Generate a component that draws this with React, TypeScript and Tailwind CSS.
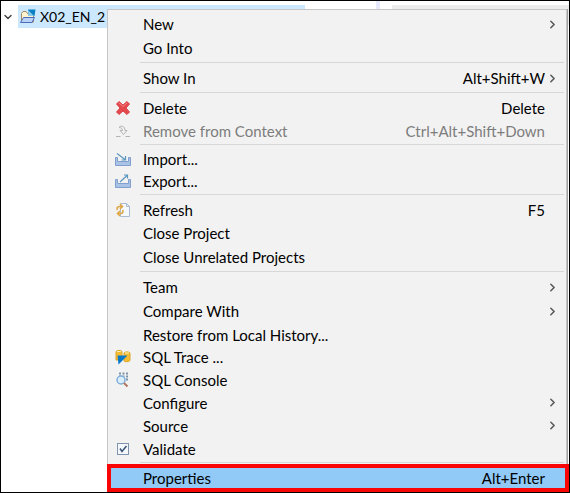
import type { ReactNode } from "react";
import { ChevronDown, ChevronRight } from "lucide-react";

function DeleteIcon() {
  return (
    <svg width="16" height="16" viewBox="0 0 16 16">
      <path d="M4 1.500 L8 5 L12 1.500 L14.500 4 L11 8 L14.500 12 L12 14.500 L8 11 L4 14.500 L1.500 12 L5 8 L1.500 4Z" fill="#e5484d" stroke="#d9474c" strokeLinejoin="round" />
      <path d="M4 3 L8 6.500 L12 3" fill="none" stroke="#f28a8a" />
    </svg>
  );
}

function RemoveIcon() {
  return (
    <svg width="16" height="16" viewBox="0 0 16 16" fill="none" stroke="#b4b4b4">
      <path d="M1 13.500 H5.500 M10.500 13.500 H15 M4 4.500 C6 2 10 3 10 7.500 H12 L8.500 11.500 L5 7.500 H7.500 C7.500 5.500 6 4.500 4 4.500Z" />
    </svg>
  );
}

function TrayIcon({ out = false }: { out?: boolean }) {
  return (
    <svg width="16" height="16" viewBox="0 0 16 16" fill="none">
      <path d="M0.500 6.500 H2.500 V10.500 H13.500 V6.500 H15.500 V14.500 H0.500Z" fill="#a9c3e6" stroke="#809fce" />
      {out ? (
        <path d="M5 9 L12 2.500 M9 2 H12.500 V5.500" stroke="#5b98bd" strokeWidth="1.200" />
      ) : (
        <path d="M2 2.500 L10 8.500 M10.500 5 V9 H6.500" stroke="#5b98bd" strokeWidth="1.200" />
      )}
    </svg>
  );
}

function RefreshIcon() {
  return (
    <svg width="16" height="16" viewBox="0 0 16 16" fill="none">
      <path d="M5.500 1.500 H11.500 L14.500 4.500 V14.500 H5.500Z" fill="#f5f8fc" stroke="#a9bbd0" />
      <path d="M11.500 1.500 V4.500 H14.500" stroke="#a9bbd0" />
      <path d="M7.500 4.500 H4.500 C2 4.500 1.500 6.500 2.500 8 M5 2 L7.500 4.500 L5 7 M2.500 11.500 H5.500 C8 11.500 8.500 9.500 7.500 8 M5 9 L2.500 11.500 L5 14" stroke="#dfa845" strokeWidth="1.600" />
    </svg>
  );
}

function TraceIcon() {
  return (
    <svg width="16" height="16" viewBox="0 0 16 16">
      <path d="M1 2.500 C2 1 6 1 7 2.500 V11 H1Z M9 4 C10 2.500 14 2.500 15 4 V11.500 C14 13 10 13 9 12Z" fill="#f7bd32" stroke="#dda526" />
      <path d="M2 2.500 H6 M10 4 H14" stroke="#fff0b5" />
      <path d="M2.500 6.500 H12.500 L3.500 15.500Z" fill="#0878c9" />
    </svg>
  );
}

function ConsoleIcon() {
  return (
    <svg width="16" height="16" viewBox="0 0 16 16" fill="none">
      <path d="M4 1.500 H14 M4 4.500 H14 M11 7.500 H14" stroke="#7f93ad" strokeWidth="2" strokeDasharray="2 1.500" />
      <circle cx="6" cy="8" r="4" fill="#dceefa" stroke="#7faedb" strokeWidth="1.500" />
      <path d="M9 11 L12.500 14.500" stroke="#b0765c" strokeWidth="2" />
    </svg>
  );
}

function ProjectIcon() {
  return (
    <svg width="16" height="16" viewBox="0 0 16 16">
      <path d="M1.500 13 V4.500 L3 2.500 H6 L7.500 4.500 H13.500 V13Z" fill="#fff2cf" stroke="#a58a64" />
      <path d="M0.500 13.500 L3.500 8.500 H14.500 L12 13.500Z" fill="#b9d2f5" stroke="#4a6cb8" />
      <path d="M8 0.500 H15.500 L14.500 7 H8.500Z" fill="#0a80c4" />
      <path d="M8 1 L14 7 H8.500Z" fill="#8ecbe8" />
    </svg>
  );
}

const heights = {
  compact: "h-[22px]",
  regular: "h-[23px]",
  tall: "h-6",
};

type ItemProps = {
  label: string;
  icon?: ReactNode;
  shortcut?: string;
  submenu?: boolean;
  size?: keyof typeof heights;
  disabled?: boolean;
};

function Item({ label, icon, shortcut, submenu, size = "regular", disabled }: ItemProps) {
  return (
    <button
      type="button"
      role="menuitem"
      disabled={disabled}
      className={`flex w-full items-center px-[7px] text-left disabled:text-[#7d7d7d] ${heights[size]}`}
    >
      <span className="flex w-7 shrink-0">{icon}</span>
      <span className="flex-1">{label}</span>
      <span>{shortcut}</span>
      <span className="flex w-[14px] shrink-0 justify-end">
        {submenu && <ChevronRight size={13} strokeWidth={3} color="#5c5c5c" />}
      </span>
    </button>
  );
}

function CheckItem({ label }: { label: string }) {
  return (
    <label className="flex h-[23px] items-center px-[7px]">
      <span className="grid w-7 shrink-0 pl-0.5">
        <input
          type="checkbox"
          defaultChecked
          className="peer col-start-1 row-start-1 size-3 appearance-none border border-[#7f93ad] bg-[#f4f8fc]"
        />
        <svg viewBox="0 0 12 12" fill="none" className="pointer-events-none invisible col-start-1 row-start-1 size-3 peer-checked:visible">
          <path d="M3 5.500 L5 8.500 L9.500 3" stroke="#3f5878" strokeWidth="1.600" />
        </svg>
      </span>
      <span>{label}</span>
    </label>
  );
}

function Separator() {
  return (
    <div role="separator" className="mr-0.5 ml-8 h-1.5 pt-0.5">
      <div className="h-px bg-[#d7d7d7]" />
    </div>
  );
}

export default function App() {
  return (
    <main className="relative min-h-screen border border-black bg-white font-['Lato',sans-serif] text-[15px] leading-5 text-black">
      <div className="flex items-start pt-1">
        <button type="button" aria-label="Collapse project" className="flex h-6 w-[17px] shrink-0 items-center pl-px">
          <ChevronDown size={12} strokeWidth={3} color="#444" />
        </button>
        <div className="flex h-[23px] w-[287px] shrink-0 items-center gap-1 bg-[#cce8ff] pl-0.5">
          <ProjectIcon />
          <span className="text-sm">X02_EN_2</span>
        </div>
        <div className="-mt-1 ml-[71px] h-6 w-1 shrink-0 bg-[#e6e9fb]" />
        <div className="ml-3 h-5 flex-1 bg-[#ececec]" />
      </div>
      <div
        role="menu"
        className="absolute top-2 right-0.5 left-[106px] border border-b-0 border-[#c6c6c6] bg-[#f2f2f2] pt-0.5 shadow-[1px_0_0_#a0a0a0]"
      >
        <Item label="New" submenu size="tall" />
        <Item label="Go Into" size="tall" />
        <Separator />
        <Item label="Show In" shortcut="Alt+Shift+W" submenu size="tall" />
        <Separator />
        <Item label="Delete" icon={<DeleteIcon />} shortcut="Delete" />
        <Item label="Remove from Context" icon={<RemoveIcon />} shortcut="Ctrl+Alt+Shift+Down" disabled />
        <Separator />
        <Item label="Import..." icon={<TrayIcon />} size="compact" />
        <Item label="Export..." icon={<TrayIcon out />} size="compact" />
        <Separator />
        <Item label="Refresh" icon={<RefreshIcon />} shortcut="F5" />
        <Item label="Close Project" size="tall" />
        <Item label="Close Unrelated Projects" size="tall" />
        <Separator />
        <Item label="Team" submenu size="tall" />
        <Item label="Compare With" submenu size="tall" />
        <Item label="Restore from Local History..." />
        <Item label="SQL Trace ..." icon={<TraceIcon />} size="compact" />
        <Item label="SQL Console" icon={<ConsoleIcon />} />
        <Item label="Configure" submenu />
        <Item label="Source" submenu />
        <CheckItem label="Validate" />
        <Separator />
        <div className="-mt-0.5 -mr-[3px] -ml-px border-4 border-[#fa0505] bg-[#91c9f7]">
          <button type="button" role="menuitem" className="flex h-5 w-full items-center pr-5 pl-8 text-left">
            <span className="flex-1">Properties</span>
            <span>Alt+Enter</span>
          </button>
        </div>
      </div>
    </main>
  );
}
